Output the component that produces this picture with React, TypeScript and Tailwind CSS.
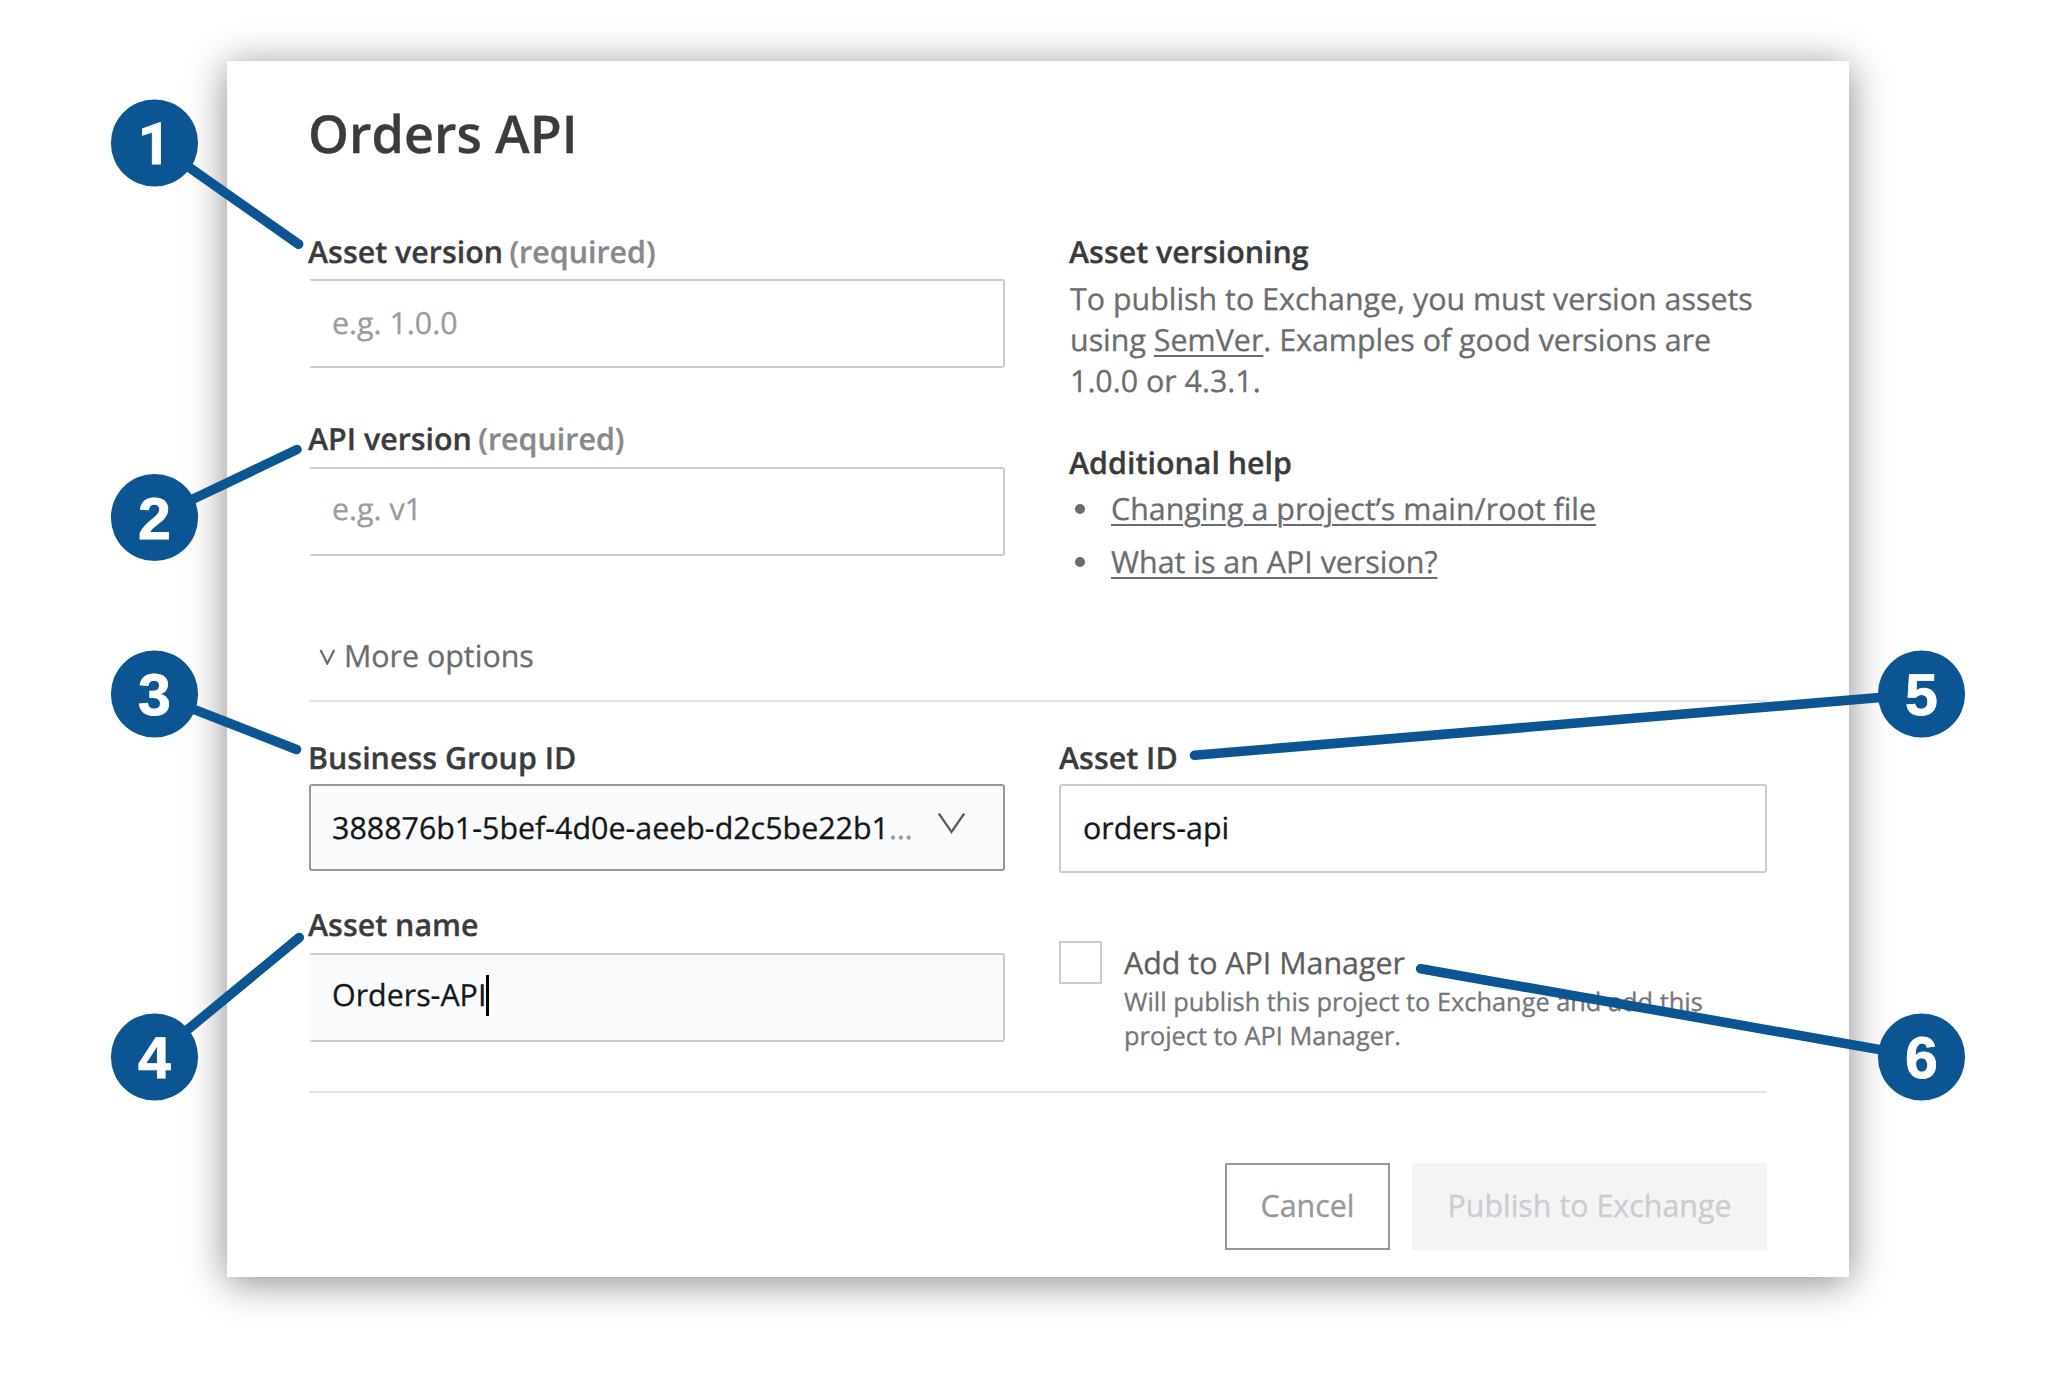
import React from "react";

type Callout = { n: number; cx: number; cy: number; x: number; y: number };

const callouts: Callout[] = [
  { n: 1, cx: 154.5, cy: 143, x: 298.6, y: 244.3 },
  { n: 2, cx: 154.5, cy: 517.5, x: 297, y: 449.5 },
  { n: 3, cx: 154.5, cy: 694, x: 296.5, y: 749.5 },
  { n: 4, cx: 154.5, cy: 1057, x: 299.3, y: 937.5 },
  { n: 5, cx: 1921.5, cy: 694, x: 1194.5, y: 755.3 },
  { n: 6, cx: 1921.5, cy: 1057, x: 1420.7, y: 968.7 },
];

function Callouts() {
  return (
    <svg
      className="pointer-events-none absolute left-0 top-0"
      width="2048"
      height="1388"
      viewBox="0 0 2048 1388"
    >
      {callouts.map((c) => (
        <g key={c.n}>
          <line
            x1={c.cx}
            y1={c.cy}
            x2={c.x}
            y2={c.y}
            stroke="#0b5592"
            strokeWidth="9.6"
            strokeLinecap="round"
          />
          <circle cx={c.cx} cy={c.cy} r="43.6" fill="#0b5592" />
          <text
            x={c.cx}
            y={c.cy + 21}
            textAnchor="middle"
            fill="#ffffff"
            stroke="#ffffff"
            strokeWidth="0.8"
            className={
              c.n === 1
                ? "font-['Roboto',sans-serif] text-[58px] font-bold"
                : "font-['Liberation_Sans',sans-serif] text-[59px] font-bold"
            }
          >
            {c.n}
          </text>
        </g>
      ))}
    </svg>
  );
}

function Label({ children, required }: { children: React.ReactNode; required?: boolean }) {
  return (
    <div className="-ml-px whitespace-nowrap leading-[42px] font-semibold text-[#3a3b3c]">
      {children}
      {required && <span className="-ml-[1.5px] text-[#87888a]"> (required)</span>}
    </div>
  );
}

export default function App() {
  return (
    <div className="relative h-[1388px] w-[2048px] overflow-hidden bg-white pl-[227px] pt-[61px] font-['Open_Sans',sans-serif] text-[30.4px] text-[#6b6c6d] [text-rendering:geometricPrecision] [-webkit-text-stroke-width:0.3px]">
      <main className="h-[1216px] w-[1622px] bg-white px-[82px] pt-[37px] shadow-[0_5px_37px_rgba(0,0,0,0.47)]">
        <h1 className="-ml-px text-[52.1px] leading-[72px] font-semibold text-[#3a3b3c]">Orders API</h1>

        <section className="mt-[61px] flex">
          <div className="w-[696px]">
            <Label required>Asset version</Label>
            <div className="mt-[6px] flex h-[89px] items-center rounded-r-[3px] border-2 border-[#cacbcc] border-l-white pl-[21px] text-[#9a9b9d]">
              <span className="-mt-[2px]">e.g. 1.0.0</span>
            </div>
            <div className="mt-[50px]">
              <Label required>API version</Label>
            </div>
            <div className="mt-[7px] flex h-[89px] items-center rounded-r-[3px] border-2 border-[#cacbcc] border-l-white pl-[21px] text-[#9a9b9d]">
              <span className="-mt-[5px]">e.g. v1</span>
            </div>
          </div>

          <aside className="ml-[65px] whitespace-nowrap">
            <Label>Asset versioning</Label>
            <p className="mt-[5px] leading-[41px]">
              To publish to Exchange, you must version assets
              <br />
              using{" "}
              <a className="underline decoration-2 underline-offset-4">SemVer</a>. Examples of good versions are
              <br />
              1.0.0 or 4.3.1.
            </p>
            <div className="mt-[41px]">
              <Label>Additional help</Label>
            </div>
            <ul className="mt-[4px] flex flex-col gap-[11px] leading-[42px]">
              <li className="flex items-center">
                <span className="ml-[5px] mr-[26px] size-[10px] rounded-full bg-[#6b6c6d]" />
                <a className="underline decoration-2 underline-offset-4">Changing a project’s main/root file</a>
              </li>
              <li className="flex items-center">
                <span className="ml-[5px] mr-[26px] size-[10px] rounded-full bg-[#6b6c6d]" />
                <a className="underline decoration-2 underline-offset-4">What is an API version?</a>
              </li>
            </ul>
          </aside>
        </section>

        <div className="mt-[52px] flex h-[67px] items-start border-b-2 border-[#e3e3e3] pl-[10px] leading-[42px]">
          <svg className="mt-[14px] mr-[8px]" width="17" height="16" viewBox="0 0 17 16" fill="none">
            <path d="M1.5 1 L8.3 14.5 L15.2 1" stroke="#6b6c6d" strokeWidth="2.2" />
          </svg>
          More options
        </div>

        <section className="mt-[35px] flex gap-[54px]">
          <div className="w-[696px]">
            <Label>Business Group ID</Label>
            <div className="mt-[5px] flex h-[87px] items-center rounded-[3px] border-2 border-[#97989a] bg-[#f9fafc] pl-[21px] text-[#151617]">
              <span className="w-[583px] whitespace-nowrap">
                388876b1-5bef-4d0e-aeeb-d2c5be22b1<span className="text-[#97989a]">…</span>
              </span>
              <svg className="-mt-[8px] ml-[22px]" width="29" height="22" viewBox="0 0 29 22" fill="none">
                <path d="M1.8 0.5 L14.5 19 L27.2 0.5" stroke="#5c5d5e" strokeWidth="2.3" />
              </svg>
            </div>
            <div className="mt-[33px]">
              <Label>Asset name</Label>
            </div>
            <div className="mt-[7px] flex h-[89px] items-center rounded-r-[3px] border-2 border-[#cacbcc] border-l-[#f9fafc] bg-[#f9fafc] pl-[21px] text-[#151617]">
              <span className="-mt-[6px]">Orders-API</span>
              <span className="-mt-[4px] h-[41px] w-[2.5px] bg-black" />
            </div>
          </div>

          <div className="w-[708px]">
            <div className="pl-px">
              <Label>Asset ID</Label>
            </div>
            <div className="mt-[5px] flex h-[89px] items-center rounded-[3px] border-2 border-[#cacbcc] pl-[22px] text-[#151617]">
              <span className="-mt-[2px]">orders-api</span>
            </div>
            <div className="mt-[68px] flex">
              <span className="size-[43px] border-2 border-[#cacbcc]" />
              <div className="ml-[22px] mt-px h-[109px] whitespace-nowrap">
                <div className="leading-[42px] text-[#5c5d5e]">Add to API Manager</div>
                <div className="mt-px text-[25.37px] leading-[34px] text-[#747576]">
                  Will publish this project to Exchange and add this
                  <br />
                  project to API Manager.
                </div>
              </div>
            </div>
          </div>
        </section>

        <div className="mt-[40px] border-t-2 border-[#e3e3e3]" />

        <footer className="mt-[70px] flex justify-end gap-[22px]">
          <button className="h-[87px] w-[165px] border-[2.5px] border-[#97989a] pb-[2px] text-[#97989a]">Cancel</button>
          <button className="h-[87px] w-[355px] bg-[#f3f4f6] pb-[2px] text-[#cbcccd]">Publish to Exchange</button>
        </footer>
      </main>
      <Callouts />
    </div>
  );
}
